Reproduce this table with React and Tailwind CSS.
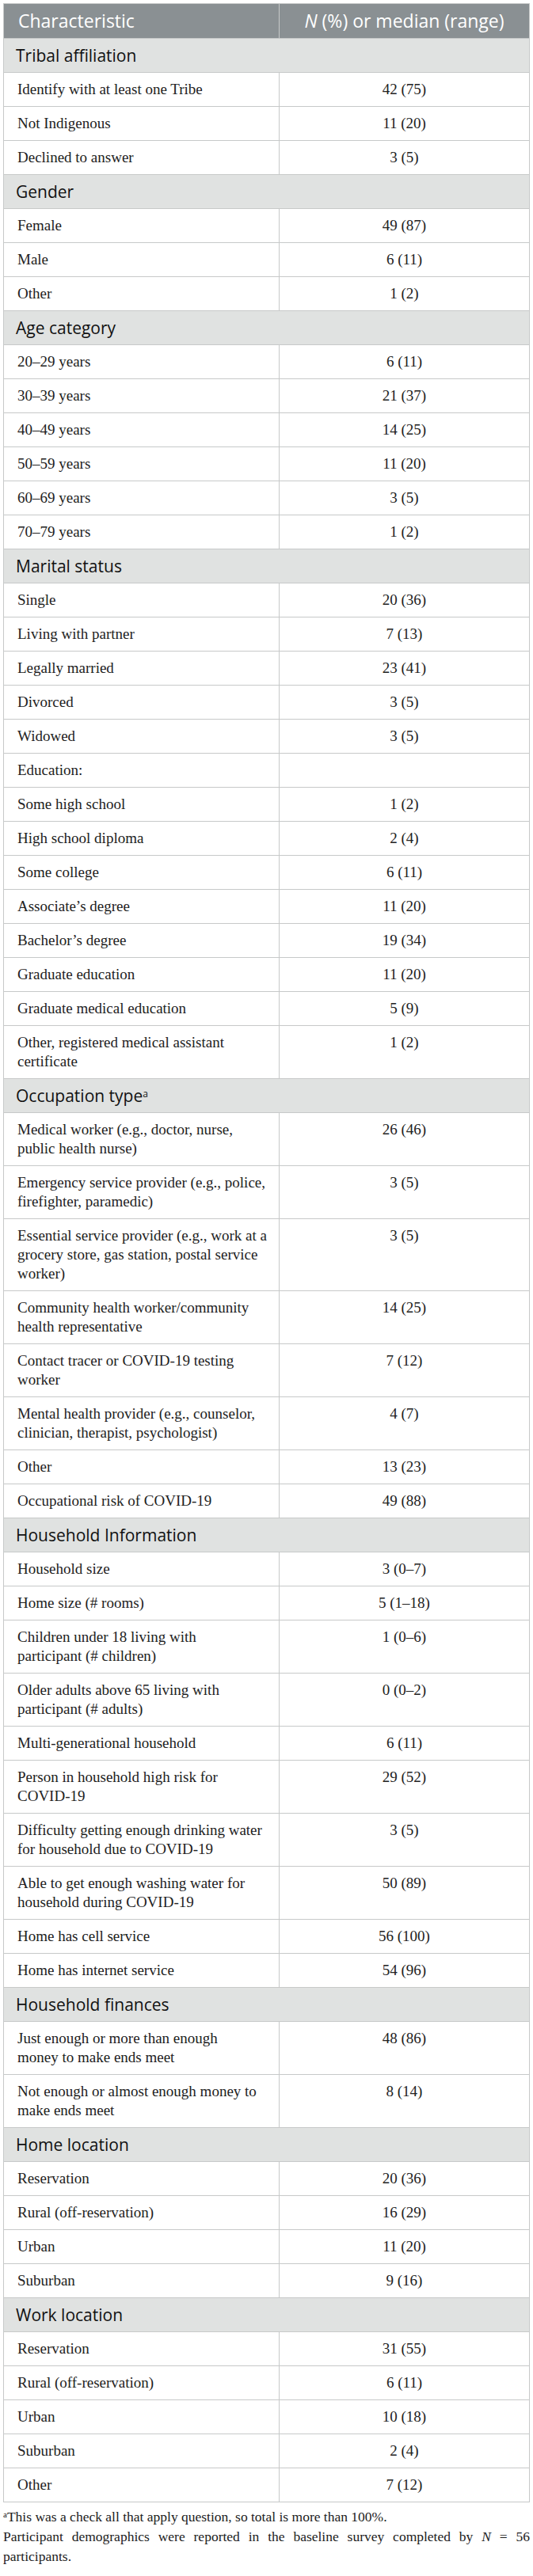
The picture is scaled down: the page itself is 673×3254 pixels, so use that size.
import React from 'react';

// labels use \n where the printed table breaks the line
const sections = [
    {
        title: 'Tribal affiliation',
        rows: [
            ['Identify with at least one Tribe', '42 (75)'],
            ['Not Indigenous', '11 (20)'],
            ['Declined to answer', '3 (5)'],
        ],
    },
    {
        title: 'Gender',
        rows: [
            ['Female', '49 (87)'],
            ['Male', '6 (11)'],
            ['Other', '1 (2)'],
        ],
    },
    {
        title: 'Age category',
        rows: [
            ['20–29 years', '6 (11)'],
            ['30–39 years', '21 (37)'],
            ['40–49 years', '14 (25)'],
            ['50–59 years', '11 (20)'],
            ['60–69 years', '3 (5)'],
            ['70–79 years', '1 (2)'],
        ],
    },
    {
        title: 'Marital status',
        rows: [
            ['Single', '20 (36)'],
            ['Living with partner', '7 (13)'],
            ['Legally married', '23 (41)'],
            ['Divorced', '3 (5)'],
            ['Widowed', '3 (5)'],
            ['Education:', ''],
            ['Some high school', '1 (2)'],
            ['High school diploma', '2 (4)'],
            ['Some college', '6 (11)'],
            ['Associate’s degree', '11 (20)'],
            ['Bachelor’s degree', '19 (34)'],
            ['Graduate education', '11 (20)'],
            ['Graduate medical education', '5 (9)'],
            ['Other, registered medical assistant\ncertificate', '1 (2)'],
        ],
    },
    {
        title: 'Occupation type',
        sup: 'a',
        rows: [
            ['Medical worker (e.g., doctor, nurse,\npublic health nurse)', '26 (46)'],
            ['Emergency service provider (e.g., police,\nfirefighter, paramedic)', '3 (5)'],
            ['Essential service provider (e.g., work at a\ngrocery store, gas station, postal service\nworker)', '3 (5)'],
            ['Community health worker/community\nhealth representative', '14 (25)'],
            ['Contact tracer or COVID-19 testing\nworker', '7 (12)'],
            ['Mental health provider (e.g., counselor,\nclinician, therapist, psychologist)', '4 (7)'],
            ['Other', '13 (23)'],
            ['Occupational risk of COVID-19', '49 (88)'],
        ],
    },
    {
        title: 'Household Information',
        rows: [
            ['Household size', '3 (0–7)'],
            ['Home size (# rooms)', '5 (1–18)'],
            ['Children under 18 living with\nparticipant (# children)', '1 (0–6)'],
            ['Older adults above 65 living with\nparticipant (# adults)', '0 (0–2)'],
            ['Multi-generational household', '6 (11)'],
            ['Person in household high risk for\nCOVID-19', '29 (52)'],
            ['Difficulty getting enough drinking water\nfor household due to COVID-19', '3 (5)'],
            ['Able to get enough washing water for\nhousehold during COVID-19', '50 (89)'],
            ['Home has cell service', '56 (100)'],
            ['Home has internet service', '54 (96)'],
        ],
    },
    {
        title: 'Household finances',
        rows: [
            ['Just enough or more than enough\nmoney to make ends meet', '48 (86)'],
            ['Not enough or almost enough money to\nmake ends meet', '8 (14)'],
        ],
    },
    {
        title: 'Home location',
        rows: [
            ['Reservation', '20 (36)'],
            ['Rural (off-reservation)', '16 (29)'],
            ['Urban', '11 (20)'],
            ['Suburban', '9 (16)'],
        ],
    },
    {
        title: 'Work location',
        rows: [
            ['Reservation', '31 (55)'],
            ['Rural (off-reservation)', '6 (11)'],
            ['Urban', '10 (18)'],
            ['Suburban', '2 (4)'],
            ['Other', '7 (12)'],
        ],
    },
];

const serif = "font-['Liberation_Serif','Times_New_Roman',serif]";
const sans = "font-['Open_Sans','Noto_Sans',sans-serif]";

function App() {
    return (
        <div className="bg-white px-[4px] pt-[4px] pb-4 text-[#222]">
            <table className="w-full border-collapse border border-[#c7c9c9]">
                <colgroup>
                    <col className="w-[348px]" />
                    <col />
                </colgroup>
                <thead>
                    <tr className="bg-[#8a9093]">
                        <th className={`${sans} border border-[#c7c9c9] pl-[18px] pr-2 py-[7px] text-left text-[23px] font-normal leading-[29px] text-white`}>
                            Characteristic
                        </th>
                        <th className={`${sans} border border-[#c7c9c9] px-2 py-[7px] text-center text-[23px] font-normal leading-[29px] text-white`}>
                            <i>N</i> (%) or median (range)
                        </th>
                    </tr>
                </thead>
                <tbody>
                    {sections.map((s) => (
                        <Section key={s.title} section={s} />
                    ))}
                </tbody>
            </table>
            <div className={`${serif} mt-[6px] text-[17.5px] leading-[25px] text-[#222]`}>
                <p>
                    <sup className="text-[11px]">a</sup>This was a check all that apply question, so total is more than 100%.
                </p>
                <p className="text-justify">
                    Participant demographics were reported in the baseline survey completed by <i>N</i> = 56 participants.
                </p>
            </div>
        </div>
    );
}

const Section = ({ section }) => (
    <>
        <tr className="bg-[#e0e2e1]">
            <td colSpan={2} className={`${sans} border border-[#c7c9c9] pl-[15px] py-[7px] text-[21px] leading-[28px] text-[#111]`}>
                {section.title}
                {section.sup && <sup className="text-[12px] leading-none">{section.sup}</sup>}
            </td>
        </tr>
        {section.rows.map(([label, value], i) => (
            <tr key={i}>
                <td className={`${serif} border border-[#c7c9c9] pl-[17px] pr-2 py-[9px] align-top whitespace-pre-line text-[19px] leading-[24px]`}>
                    {label}
                </td>
                <td className={`${serif} border border-[#c7c9c9] px-2 py-[9px] align-top text-center text-[19px] leading-[24px]`}>
                    {value}
                </td>
            </tr>
        ))}
    </>
);

export default App;
